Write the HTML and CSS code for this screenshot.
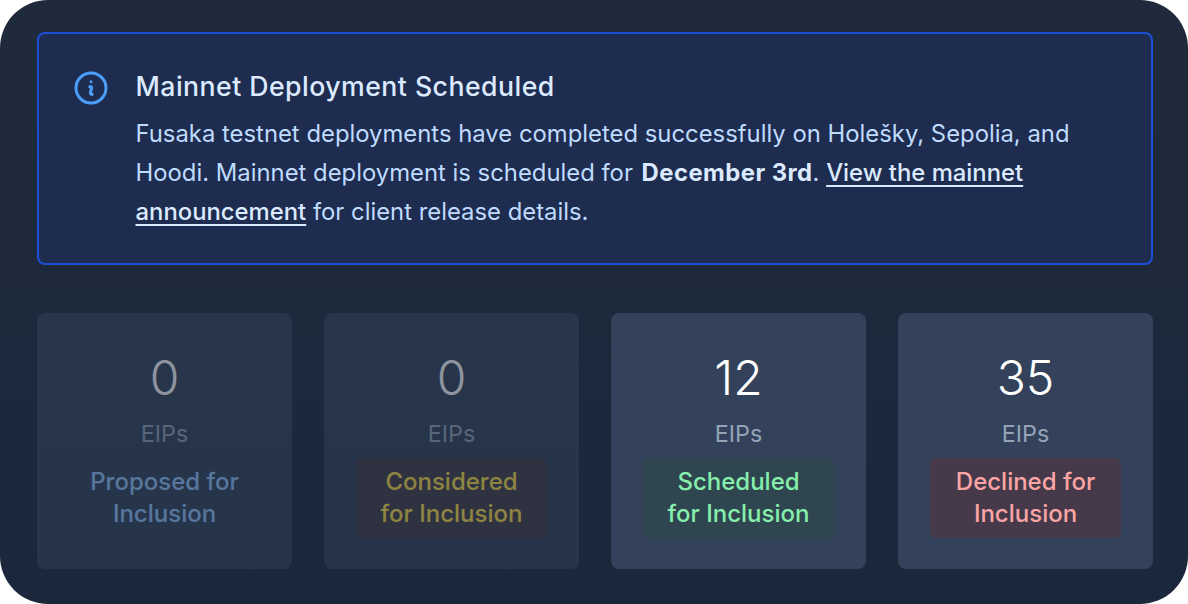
FILE: index.html
```html
<!DOCTYPE html>
<html lang="en">
<head>
    <title>Fusaka Status</title>
    <meta charset="utf-8">
    <link rel="stylesheet" href="styles.css">
</head>
<body>
    <div class="panel">
        <!-- Deployment notice -->
        <div class="alert">
            <svg class="alert-icon" viewBox="0 0 24 24" fill="none" stroke="currentColor" stroke-width="1.8" stroke-linecap="round" stroke-linejoin="round">
                <path d="m11.25 11.25.041-.02a.75.75 0 0 1 1.063.852l-.708 2.836a.75.75 0 0 0 1.063.853l.041-.021M21 12a9 9 0 1 1-18 0 9 9 0 0 1 18 0Zm-9-3.75h.008v.008H12V8.25Z"/>
            </svg>
            <div class="alert-body">
                <h3 class="alert-title">Mainnet Deployment Scheduled</h3>
                <p class="alert-text">Fusaka testnet deployments have completed successfully on Holešky, Sepolia, and Hoodi. Mainnet deployment is scheduled for <strong>December 3rd</strong>. <a href="#">View the mainnet announcement</a> for client release details.</p>
            </div>
        </div>

        <!-- Stage counts -->
        <div class="stats">
            <div class="card card-empty">
                <div class="count">0</div>
                <div class="unit">EIPs</div>
                <div class="stage stage-proposed">Proposed for Inclusion</div>
            </div>
            <div class="card card-empty">
                <div class="count">0</div>
                <div class="unit">EIPs</div>
                <div class="stage stage-considered">Considered for Inclusion</div>
            </div>
            <div class="card">
                <div class="count">12</div>
                <div class="unit">EIPs</div>
                <div class="stage stage-scheduled">Scheduled for Inclusion</div>
            </div>
            <div class="card">
                <div class="count">35</div>
                <div class="unit">EIPs</div>
                <div class="stage stage-declined">Declined for Inclusion</div>
            </div>
        </div>
    </div>
</body>
</html>
```

FILE: styles.css
```css
body {
    margin: 0;
    background-color: #fff;
    font-family: Inter, "Liberation Sans", sans-serif;
}
.panel {
    box-sizing: border-box;
    width: 1188px;
    height: 604px;
    padding: 32px 35px 0 37px;
    background: linear-gradient(#1f2a3c, #1b273b);
    border-radius: 48px;
}
.alert {
    box-sizing: border-box;
    height: 233px;
    display: flex;
    gap: 24.5px;
    padding: 34px 32px 0;
    background-color: #1e2c50;
    border: 2px solid #1d4ed8;
    border-radius: 8px;
}
.alert-icon {
    flex: none;
    width: 40px;
    height: 40px;
    color: #4b9df8;
}
.alert-title {
    margin: 0 0 9px;
    font-size: 26.67px;
    line-height: 37px;
    font-weight: 500;
    letter-spacing: 0.46px;
    color: #dbeafe;
}
.alert-text {
    margin: 0;
    font-size: 23.85px;
    line-height: 39px;
    color: #bfdbfe;
}
.alert-text strong {
    margin-left: 2px;
    font-weight: 700;
    letter-spacing: 0.45px;
    color: #dbeafe;
}
.alert-text a {
    color: #dbeafe;
    font-weight: 500;
    text-decoration: underline;
    text-underline-offset: 4px;
}
.stats {
    display: grid;
    grid-template-columns: repeat(4, 255px);
    gap: 32px;
    margin-top: 48px;
}
.card {
    box-sizing: border-box;
    height: 256px;
    display: flex;
    flex-direction: column;
    align-items: center;
    padding: 33px 32px 0;
    background-color: #33425a;
    border-radius: 8px;
    text-align: center;
}
.card-empty {
    opacity: 0.5;
}
.count {
    font-size: 48px;
    line-height: 64px;
    font-weight: 300;
    color: #fff;
}
.unit {
    margin-top: 11px;
    font-size: 23.3px;
    line-height: 26px;
    color: #94a3b8;
}
.stage {
    margin-top: 11px;
    padding: 8px 16px;
    border-radius: 6px;
    font-size: 24px;
    line-height: 32px;
    font-weight: 500;
}
.stage-proposed {
    color: #93c5fd;
    background-color: #33435c;
}
.stage-considered {
    color: #fde047;
    background-color: #423c45;
}
.stage-scheduled {
    color: #86efac;
    background-color: #2f4650;
}
.stage-declined {
    color: #fca5a5;
    background-color: #463a4a;
}
```
